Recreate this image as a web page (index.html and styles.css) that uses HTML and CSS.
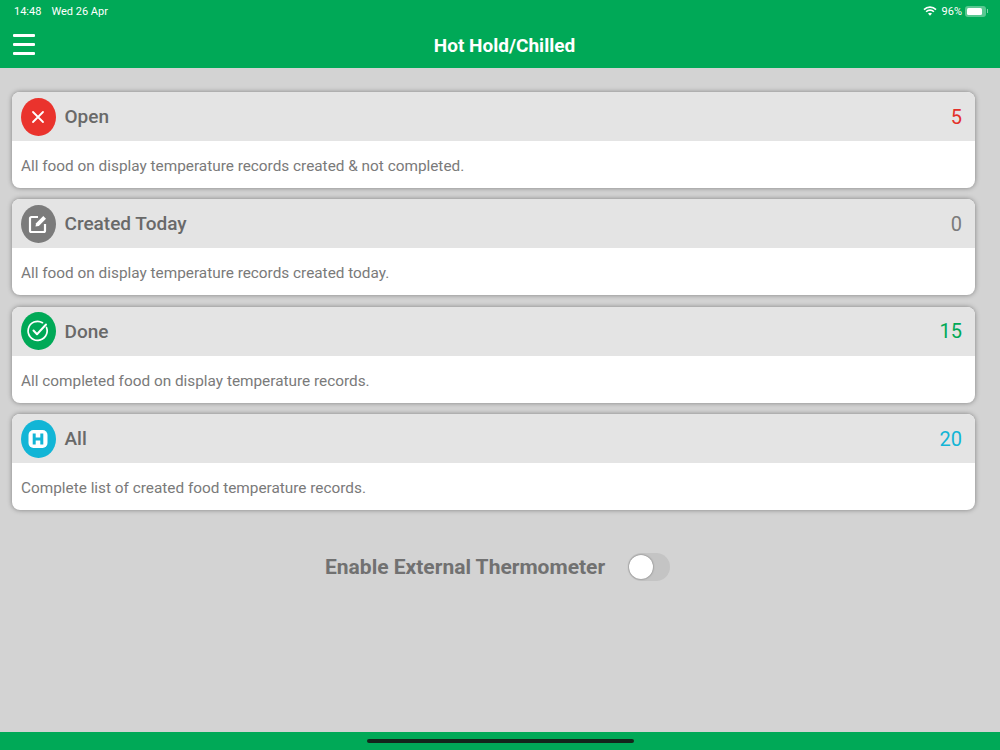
FILE: index.html
```html
<!DOCTYPE html>
<html lang="en">
<head>
  <meta charset="UTF-8" />
  <title>Hot Hold/Chilled</title>
  <meta name="viewport" content="width=device-width, initial-scale=1.0" />
  <link rel="stylesheet" href="styles.css">
</head>
<body>

  <header class="app-header">
    <div class="status-bar">
      <div class="status-left"><span>14:48</span><span>Wed 26 Apr</span></div>
      <div class="status-right">
        <svg class="wifi" width="14" height="10" viewBox="0 0 14 10">
          <path d="M1 3.6a8.6 8.6 0 0 1 12 0M3.1 5.7a5.6 5.6 0 0 1 7.8 0" fill="none" stroke="#fff" stroke-width="1.6"/>
          <path d="M5 7.6a2.9 2.9 0 0 1 4 0L7 9.8z" fill="#fff"/>
        </svg>
        <span>96%</span>
        <div class="battery"><div class="battery-fill"></div></div>
        <div class="battery-tip"></div>
      </div>
    </div>
    <div class="title-bar">
      <div class="menu-icon"><span></span><span></span><span></span></div>
      <h1>Hot Hold/Chilled</h1>
    </div>
  </header>

  <main class="content">
    <section class="card">
      <div class="card-head">
        <div class="badge badge-red">
          <svg width="16" height="16" viewBox="0 0 16 16"><path d="M3 3l10 10M13 3L3 13" stroke="#fff" stroke-width="1.8" stroke-linecap="round"/></svg>
        </div>
        <span class="card-title">Open</span>
        <span class="count count-red">5</span>
      </div>
      <p class="card-text">All food on display temperature records created &amp; not completed.</p>
    </section>

    <section class="card">
      <div class="card-head">
        <div class="badge badge-grey">
          <svg width="20" height="20" viewBox="0 0 20 20">
            <path d="M10 3H3.500a1.500 1.500 0 0 0-1.500 1.500v12a1.500 1.500 0 0 0 1.500 1.500H15.500a1.500 1.500 0 0 0 1.500-1.500V10" fill="none" stroke="#fff" stroke-width="2.200"/>
            <path d="M7.500 12.500l.6-3.300L15.300 2l2.700 2.700-7.200 7.200z" fill="#fff"/>
          </svg>
        </div>
        <span class="card-title">Created Today</span>
        <span class="count count-grey">0</span>
      </div>
      <p class="card-text">All food on display temperature records created today.</p>
    </section>

    <section class="card">
      <div class="card-head">
        <div class="badge badge-green">
          <svg width="26" height="26" viewBox="0 0 26 26">
            <path d="M21.500 9.500A9.500 9.500 0 1 1 17.500 4.700" fill="none" stroke="#fff" stroke-width="1.700" stroke-linecap="round"/>
            <path d="M8.500 12.500l3.500 3.700 9-9.700" fill="none" stroke="#fff" stroke-width="2" stroke-linecap="round" stroke-linejoin="round"/>
          </svg>
        </div>
        <span class="card-title">Done</span>
        <span class="count count-green">15</span>
      </div>
      <p class="card-text">All completed food on display temperature records.</p>
    </section>

    <section class="card">
      <div class="card-head">
        <div class="badge badge-blue">
          <svg width="20" height="20" viewBox="0 0 20 20">
            <rect x="0.500" y="1" width="19" height="18" rx="5" fill="#fff"/>
            <path d="M6.200 4.500v11M13.800 4.500v11M6.200 10h7.600" fill="none" stroke="#12b5d6" stroke-width="3"/>
          </svg>
        </div>
        <span class="card-title">All</span>
        <span class="count count-blue">20</span>
      </div>
      <p class="card-text">Complete list of created food temperature records.</p>
    </section>

    <div class="thermo-row">
      <span class="thermo-label">Enable External Thermometer</span>
      <div class="toggle"><div class="toggle-knob"></div></div>
    </div>
  </main>

  <footer class="app-footer"><div class="home-bar"></div></footer>

</body>
</html>
```

FILE: styles.css
```css
html, body {
  height: 100%;
}
body {
  font-family: Roboto, "Liberation Sans", sans-serif;
  background: #d3d3d3;
  margin: 0;
  padding: 0;
  display: flex;
  flex-direction: column;
  overflow: hidden;
}
/* Header */
.app-header {
  background: #00a957;
  color: white;
  height: 68px;
  flex-shrink: 0;
}
.status-bar {
  display: flex;
  justify-content: space-between;
  align-items: center;
  height: 22px;
  padding: 0 12px 0 14px;
  font-size: 11px;
}
.status-left {
  display: flex;
  gap: 10px;
}
.status-right {
  display: flex;
  align-items: center;
  gap: 3px;
}
.wifi {
  margin-right: 2px;
}
.battery {
  width: 21px;
  height: 11px;
  border-radius: 3px;
  background: rgba(255, 255, 255, 0.35);
  padding: 2px;
  box-sizing: border-box;
}
.battery-fill {
  background: #fff;
  height: 100%;
  width: 90%;
  border-radius: 1.500px;
}
.battery-tip {
  width: 1px;
  height: 4px;
  background: rgba(255, 255, 255, 0.5);
  margin-left: -2px;
}
.title-bar {
  position: relative;
  display: flex;
  align-items: center;
  justify-content: center;
  height: 46px;
}
.title-bar h1 {
  margin: 0 0 0 9px;
  font-size: 19px;
  font-weight: 700;
}
.menu-icon {
  position: absolute;
  left: 13px;
  top: 12px;
  width: 22px;
  display: flex;
  flex-direction: column;
  gap: 6.500px;
}
.menu-icon span {
  display: block;
  height: 2.500px;
  background: #fff;
  border-radius: 1px;
}
/* Cards */
.content {
  flex: 1;
  padding: 24px 25px 0 12px;
  display: flex;
  flex-direction: column;
  gap: 11.400px;
}
.card {
  background: #fff;
  border-radius: 8px;
  height: 96px;
  box-shadow: 0 0 5px rgba(0, 0, 0, 0.4);
  overflow: hidden;
  flex-shrink: 0;
}
.card-head {
  display: flex;
  align-items: center;
  height: 49px;
  background: #e4e4e4;
  padding: 0 13px 0 8.500px;
}
.badge {
  width: 35px;
  height: 38px;
  border-radius: 50%;
  display: flex;
  align-items: center;
  justify-content: center;
  flex-shrink: 0;
}
.badge-red { background: #ea332d; }
.badge-grey { background: #7b7b7b; }
.badge-green { background: #00a957; }
.badge-blue { background: #12b5d6; }
.card-title {
  margin-left: 9px;
  font-size: 19px;
  font-weight: 500;
  color: #696969;
  flex: 1;
}
.count {
  font-size: 20px;
  font-weight: 400;
}
.count-red { color: #e3302a; }
.count-grey { color: #7b7b7b; }
.count-green { color: #00a957; }
.count-blue { color: #12b5d6; }
.card-text {
  margin: 0;
  padding: 16px 9px 0;
  font-size: 15.350px;
  line-height: 19px;
  color: #7a7a7a;
}
/* Thermometer row */
.thermo-row {
  display: flex;
  align-items: center;
  margin-top: 31px;
  padding-left: 313px;
  gap: 23px;
}
.thermo-label {
  font-size: 21px;
  font-weight: 700;
  color: #717171;
}
.toggle {
  width: 42px;
  height: 28px;
  border-radius: 14px;
  background: #c4c4c4;
  position: relative;
}
.toggle-knob {
  position: absolute;
  left: 1px;
  top: 2px;
  width: 24px;
  height: 24px;
  border-radius: 50%;
  background: #fff;
  box-shadow: 0 0 2px rgba(0, 0, 0, 0.5);
}
/* Footer */
.app-footer {
  height: 18px;
  background: #00a957;
  flex-shrink: 0;
  display: flex;
  justify-content: center;
  padding-top: 7px;
  box-sizing: border-box;
}
.home-bar {
  width: 267px;
  height: 4px;
  border-radius: 2px;
  background: #13261b;
}
```
